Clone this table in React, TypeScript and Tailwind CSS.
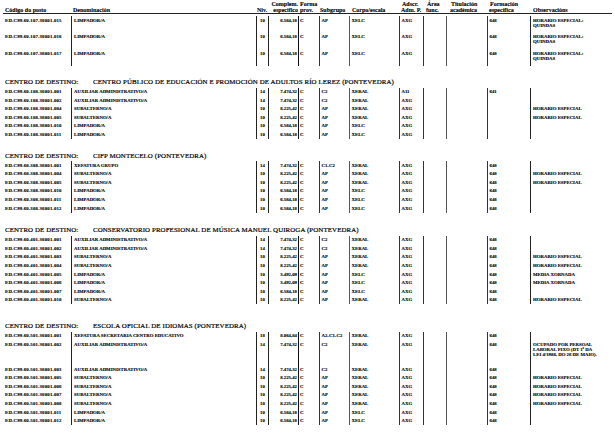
type Post = {
  c: string
  d: string
  n: string
  e: string
  s: string
  k: string
  a: string
  fo?: string
  o?: string[]
  tall?: boolean
}

type Centre = {
  name?: string
  rows: Post[]
}

const LIMP = { d: 'LIMPADOR/A', n: '10', e: '6.584,18' }
const SUB = { d: 'SUBALTERNO/A', n: '10', e: '8.225,42' }
const AUX = { d: 'AUXILIAR ADMINISTRATIVO/A', n: '14', e: '7.474,32' }
const QUINDAS = ['HORARIO ESPECIAL:', 'QUINDAS']
const HE = ['HORARIO ESPECIAL']

const centres: Centre[] = [
  {
    rows: [
      { c: 'ED.C99.60.107.36001.015', ...LIMP, s: 'AP', k: 'XELC', a: 'AXG', fo: '648', o: QUINDAS, tall: true },
      { c: 'ED.C99.60.107.36001.016', ...LIMP, s: 'AP', k: 'XELC', a: 'AXG', fo: '648', o: QUINDAS, tall: true },
      { c: 'ED.C99.60.107.36001.017', ...LIMP, s: 'AP', k: 'XELC', a: 'AXG', fo: '648', o: QUINDAS, tall: true },
    ],
  },
  {
    name: 'CENTRO PÚBLICO DE EDUCACIÓN E PROMOCIÓN DE ADULTOS RÍO LEREZ (PONTEVEDRA)',
    rows: [
      { c: 'ED.C99.60.108.36001.001', ...AUX, s: 'C2', k: 'XERAL', a: 'A11', fo: '641' },
      { c: 'ED.C99.60.108.36001.002', ...AUX, s: 'C2', k: 'XERAL', a: 'AXG' },
      { c: 'ED.C99.60.108.36001.004', ...SUB, s: 'AP', k: 'XERAL', a: 'AXG', o: HE },
      { c: 'ED.C99.60.108.36001.005', ...SUB, s: 'AP', k: 'XERAL', a: 'AXG', o: HE },
      { c: 'ED.C99.60.108.36001.010', ...LIMP, s: 'AP', k: 'XELC', a: 'AXG' },
      { c: 'ED.C99.60.108.36001.011', ...LIMP, s: 'AP', k: 'XELC', a: 'AXG' },
    ],
  },
  {
    name: 'CIFP MONTECELO (PONTEVEDRA)',
    rows: [
      { c: 'ED.C99.60.308.36001.001', d: 'XEFATURA GRUPO', n: '14', e: '7.474,32', s: 'C1-C2', k: 'XERAL', a: 'AXG', fo: '648' },
      { c: 'ED.C99.60.308.36001.004', ...SUB, s: 'AP', k: 'XERAL', a: 'AXG', fo: '648', o: HE },
      { c: 'ED.C99.60.308.36001.005', ...SUB, s: 'AP', k: 'XERAL', a: 'AXG', fo: '648', o: HE },
      { c: 'ED.C99.60.308.36001.010', ...LIMP, s: 'AP', k: 'XELC', a: 'AXG', fo: '648' },
      { c: 'ED.C99.60.308.36001.011', ...LIMP, s: 'AP', k: 'XELC', a: 'AXG', fo: '648' },
      { c: 'ED.C99.60.308.36001.012', ...LIMP, s: 'AP', k: 'XELC', a: 'AXG', fo: '648' },
    ],
  },
  {
    name: 'CONSERVATORIO PROFESIONAL DE MÚSICA MANUEL QUIROGA (PONTEVEDRA)',
    rows: [
      { c: 'ED.C99.60.401.36001.001', ...AUX, s: 'C2', k: 'XERAL', a: 'AXG', fo: '648' },
      { c: 'ED.C99.60.401.36001.002', ...AUX, s: 'C2', k: 'XERAL', a: 'AXG', fo: '648' },
      { c: 'ED.C99.60.401.36001.003', ...SUB, s: 'AP', k: 'XERAL', a: 'AXG', fo: '648', o: HE },
      { c: 'ED.C99.60.401.36001.004', ...SUB, s: 'AP', k: 'XERAL', a: 'AXG', fo: '648', o: HE },
      { c: 'ED.C99.60.401.36001.005', d: 'LIMPADOR/A', n: '10', e: '3.492,09', s: 'AP', k: 'XELC', a: 'AXG', fo: '648', o: ['MEDIA XORNADA'] },
      { c: 'ED.C99.60.401.36001.006', d: 'LIMPADOR/A', n: '10', e: '3.492,09', s: 'AP', k: 'XELC', a: 'AXG', fo: '648', o: ['MEDIA XORNADA'] },
      { c: 'ED.C99.60.401.36001.007', ...LIMP, s: 'AP', k: 'XELC', a: 'AXG', fo: '648' },
      { c: 'ED.C99.60.401.36001.010', ...SUB, s: 'AP', k: 'XERAL', a: 'AXG', fo: '648', o: HE },
    ],
  },
  {
    name: 'ESCOLA OFICIAL DE IDIOMAS (PONTEVEDRA)',
    rows: [
      { c: 'ED.C99.60.501.36001.001', d: 'XEFATURA SECRETARIA CENTRO EDUCATIVO', n: '18', e: '8.064,84', s: 'A2-C1-C2', k: 'XERAL', a: 'AXG', fo: '648' },
      {
        c: 'ED.C99.60.501.36001.002', ...AUX, s: 'C2', k: 'XERAL', a: 'AXG', fo: '648',
        o: ['OCUPADO POR PERSOAL', 'LABORAL FIXO (DT 1ª DA', 'LEI 4/1988, DO 26 DE MAIO).'],
      },
      { c: 'ED.C99.60.501.36001.003', ...AUX, s: 'C2', k: 'XERAL', a: 'AXG', fo: '648' },
      { c: 'ED.C99.60.501.36001.005', ...SUB, s: 'AP', k: 'XERAL', a: 'AXG', fo: '648', o: HE },
      { c: 'ED.C99.60.501.36001.006', ...SUB, s: 'AP', k: 'XERAL', a: 'AXG', fo: '648', o: HE },
      { c: 'ED.C99.60.501.36001.007', ...SUB, s: 'AP', k: 'XERAL', a: 'AXG', fo: '648', o: HE },
      { c: 'ED.C99.60.501.36001.008', ...SUB, s: 'AP', k: 'XERAL', a: 'AXG', fo: '648', o: HE },
      { c: 'ED.C99.60.501.36001.011', ...LIMP, s: 'AP', k: 'XELC', a: 'AXG', fo: '648' },
      { c: 'ED.C99.60.501.36001.012', ...LIMP, s: 'AP', k: 'XELC', a: 'AXG', fo: '648' },
    ],
  },
]

// gaps above each centre title, measured off the print
const titleGap = ['', 'mt-[12px]', 'mt-[12px]', 'mt-[13px]', 'mt-[17.5px]']

function PostRow({ r }: { r: Post }) {
  const h = r.tall ? 'h-[16.5px]' : r.o && r.o.length > 2 ? 'h-[24.6px]' : 'h-[8.6px]'
  return (
    <div className={`flex ${h} leading-[5.2px]`}>
      <div className="w-[71px] shrink-0 pl-[5px] pt-[1.6px] tracking-[0.2px]">{r.c}</div>
      <div className="w-[185px] shrink-0 border-l border-[#222] pl-[2px] pt-[1.6px]">{r.d}</div>
      <div className="w-[12px] shrink-0 border-l border-[#222] pt-[1.6px] text-center">{r.n}</div>
      <div className="w-[30px] shrink-0 border-l border-[#222] pr-[1px] pt-[1.6px] text-right">{r.e}</div>
      <div className="w-[21px] shrink-0 border-l-[1.5px] border-[#111] pl-[1px] pt-[1.6px]">C</div>
      <div className="w-[30px] shrink-0 border-l border-[#333] pl-[1.5px] pt-[1.6px]">{r.s}</div>
      <div className="w-[50px] shrink-0 border-l border-[#555] pl-[1.5px] pt-[1.6px]">{r.k}</div>
      <div className="w-[24px] shrink-0 border-l border-[#333] pl-[1.5px] pt-[1.6px]">{r.a}</div>
      <div className="w-[23px] shrink-0 border-l border-[#333]" />
      <div className="w-[41px] shrink-0 border-l border-[#555]" />
      <div className="w-[43px] shrink-0 border-l border-[#333] pl-[1.5px] pt-[1.6px]">{r.fo}</div>
      <div className="flex-1 border-l border-[#222] pl-[2px] pt-[1.6px]">
        {r.o?.map((l) => (
          <div key={l} className="whitespace-nowrap">{l}</div>
        ))}
      </div>
    </div>
  )
}

function Header() {
  return (
    <div className="mx-[3px] flex h-[14px] border-b border-[#222] pt-[1px] text-[6px] leading-[6px] font-bold whitespace-nowrap [-webkit-text-stroke:0.1px_black]">
      <div className="w-[68px] shrink-0 pl-[2px] pt-[6px]">Código do posto</div>
      <div className="w-[185px] shrink-0 pl-[2px] pt-[6px]">Denominación</div>
      <div className="w-[13px] shrink-0 pl-[1px] pt-[6px]">Niv.</div>
      <div className="w-[29px] shrink-0 text-right">
        <div>Complem.</div>
        <div>específico</div>
      </div>
      <div className="w-[21px] shrink-0 pl-[2px]">
        <div>Forma</div>
        <div>prov.</div>
      </div>
      <div className="w-[30px] shrink-0 pl-[1px] pt-[6px]">Subgrupo</div>
      <div className="w-[50px] shrink-0 pl-[3px] pt-[6px]">Corpo/escala</div>
      <div className="w-[24px] shrink-0 pl-[2px]">
        <div className="pl-[1px]">Adscr.</div>
        <div>Adm. P.</div>
      </div>
      <div className="w-[23px] shrink-0 pl-[3px]">
        <div className="pl-[1px]">Área</div>
        <div>func.</div>
      </div>
      <div className="w-[41px] shrink-0 pl-[4px]">
        <div className="pl-[1px]">Titulación</div>
        <div>académica</div>
      </div>
      <div className="w-[43px] shrink-0 pl-[2px]">
        <div className="pl-[1px]">Formación</div>
        <div>específica</div>
      </div>
      <div className="flex-1 pl-[3px] pt-[6px]">Observacións</div>
    </div>
  )
}

export default function App() {
  return (
    <div className="h-[439px] w-[615px] overflow-hidden bg-white font-['Liberation_Serif',serif] text-black">
      <Header />
      <div className="mt-[2px] text-[4.8px] font-bold [-webkit-text-stroke:0.12px_black]">
        {centres.map((ct, i) => (
          <div key={i} className={titleGap[i]}>
            {ct.name && (
              <div className="flex h-[10px] items-center pl-[5px] text-[6.9px] leading-none font-normal whitespace-nowrap tracking-[0.1px] [-webkit-text-stroke:0.2px_black]">
                <span className="w-[88px] shrink-0">CENTRO DE DESTINO:</span>
                <span>{ct.name}</span>
              </div>
            )}
            {ct.rows.map((r) => (
              <PostRow key={r.c} r={r} />
            ))}
          </div>
        ))}
      </div>
    </div>
  )
}
